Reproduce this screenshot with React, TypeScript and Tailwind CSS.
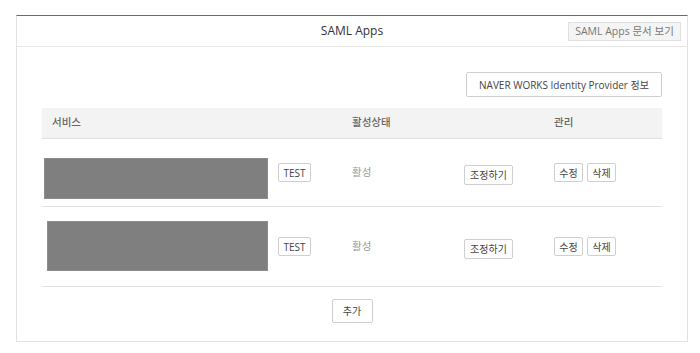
const rows = [
  { boxPad: "pl-[2px]", boxH: "h-[41px]", boxW: "w-[224px]", rowH: "h-[68px]", boxShift: "mt-[12px]" },
  { boxPad: "pl-[5px]", boxH: "h-[50px]", boxW: "w-[221px]", rowH: "h-[80px]", boxShift: "mt-[-2px]" },
];

const Btn = ({ children, className = "" }: { children: React.ReactNode; className?: string }) => (
  <button
    className={`border border-[#cfcfcf] bg-white text-[10px] leading-none text-[#444] rounded-[2px] ${className}`}
  >
    {children}
  </button>
);

export default function App() {
  return (
    <div
      className="bg-white w-[700px] h-[353px] pt-[15px] pl-[16px]"
      style={{ fontFamily: '"Open Sans", "Noto Sans CJK KR", sans-serif' }}
    >
      <div className="w-[672px] h-[327px] border border-t-[#6b6b6b] border-[#e3e3e3] flex flex-col">
        {/* header */}
        <div className="relative h-[31px] border-b border-[#e6e6e6] flex items-center justify-center">
          <span className="text-[12px] text-[#333]">SAML Apps</span>
          <button className="absolute right-[6px] top-[6px] h-[19px] w-[113px] bg-[#f4f4f4] border border-[#e0e0e0] text-[10.5px] leading-none text-[#777]">
            SAML Apps 문서 보기
          </button>
        </div>

        <div className="px-[25px] pt-[25px] flex flex-col">
          <div className="flex justify-end">
            <Btn className="h-[25px] w-[196px]">NAVER WORKS Identity Provider 정보</Btn>
          </div>

          <div className="mt-[11px] h-[31px] bg-[#f3f3f3] border-b border-[#e0e0e0] flex items-center text-[10.5px] text-[#666] font-medium">
            <div className="w-[300px] pl-[10px]">서비스</div>
            <div className="w-[202px] pl-[10px]">활성상태</div>
            <div className="pl-[10px]">관리</div>
          </div>

          {rows.map((r, i) => (
            <div key={i} className={`${r.rowH} border-b border-[#e3e3e3] flex items-center`}>
              <div className={`w-[300px] flex items-center ${r.boxPad}`}>
                <div className={`${r.boxW} ${r.boxH} ${r.boxShift} bg-[#7f7f7f] border border-[#8c8c8c]`} />
                <Btn className="ml-[10px] h-[19px] w-[33px]">TEST</Btn>
              </div>
              <div className="w-[112px] pl-[10px] text-[10.5px] text-[#999]">활성</div>
              <div className="w-[90px] pl-[10px]">
                <Btn className="h-[20px] w-[49px]">조정하기</Btn>
              </div>
              <div className="pl-[10px] flex gap-[4px]">
                <Btn className="h-[19px] w-[29px]">수정</Btn>
                <Btn className="h-[19px] w-[29px]">삭제</Btn>
              </div>
            </div>
          ))}

          <div className="flex justify-center pt-[12px]">
            <Btn className="h-[24px] w-[41px]">추가</Btn>
          </div>
        </div>
      </div>
    </div>
  );
}
